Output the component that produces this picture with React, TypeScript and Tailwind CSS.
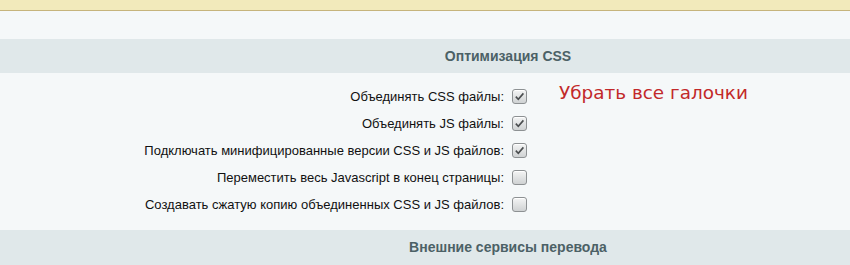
import React from "react";

const rows = [
  { label: "Объединять CSS файлы:", checked: true },
  { label: "Объединять JS файлы:", checked: true },
  { label: "Подключать минифицированные версии CSS и JS файлов:", checked: true },
  { label: "Переместить весь Javascript в конец страницы:", checked: false },
  { label: "Создавать сжатую копию объединенных CSS и JS файлов:", checked: false },
];

function Box({ checked }: { checked: boolean }) {
  return (
    <span className="w-[15px] h-[15px] rounded-[3px] border border-[#8d9193] bg-gradient-to-b from-[#f4f5f5] to-[#cfd2d3] flex items-center justify-center shadow-[inset_0_1px_0_#fff]">
      {checked && (
        <svg width="11" height="11" viewBox="0 0 11 11">
          <path d="M1.8 5.6 L4.3 8.2 L9.4 2.4" fill="none" stroke="#4a4d4f" strokeWidth="1.6" />
        </svg>
      )}
    </span>
  );
}

export default function App() {
  return (
    <div className="w-[850px] h-[265px] overflow-hidden bg-[#f5f8f9] text-[13px] text-[#111]" style={{ fontFamily: '"Liberation Sans", Arial, sans-serif' }}>
      <div className="h-[11px] bg-[#f2eabb] border-b border-[#c6b47c]" />
      <div className="h-[28px]" />
      <div className="h-[34px] bg-[#e0e8ea] pl-[166px] flex items-center justify-center font-bold text-[14px] text-[#4c6166]">
        Оптимизация CSS
      </div>
      <div className="pt-[10px] pb-[12px]">
        {rows.map((r, i) => (
          <div key={i} className="h-[27px] flex items-center">
            <div className="w-[504px] text-right">{r.label}</div>
            <div className="ml-[8px]">
              <Box checked={r.checked} />
            </div>
            {i === 0 && (
              <div className="ml-[32px] -mt-[7px] text-[18.4px] text-[#c2292a]" style={{ fontFamily: '"DejaVu Sans", sans-serif' }}>
                Убрать все галочки
              </div>
            )}
          </div>
        ))}
      </div>
      <div className="h-[35px] bg-[#e0e8ea] pl-[166px] flex items-center justify-center font-bold text-[14px] text-[#4c6166]">
        Внешние сервисы перевода
      </div>
    </div>
  );
}
